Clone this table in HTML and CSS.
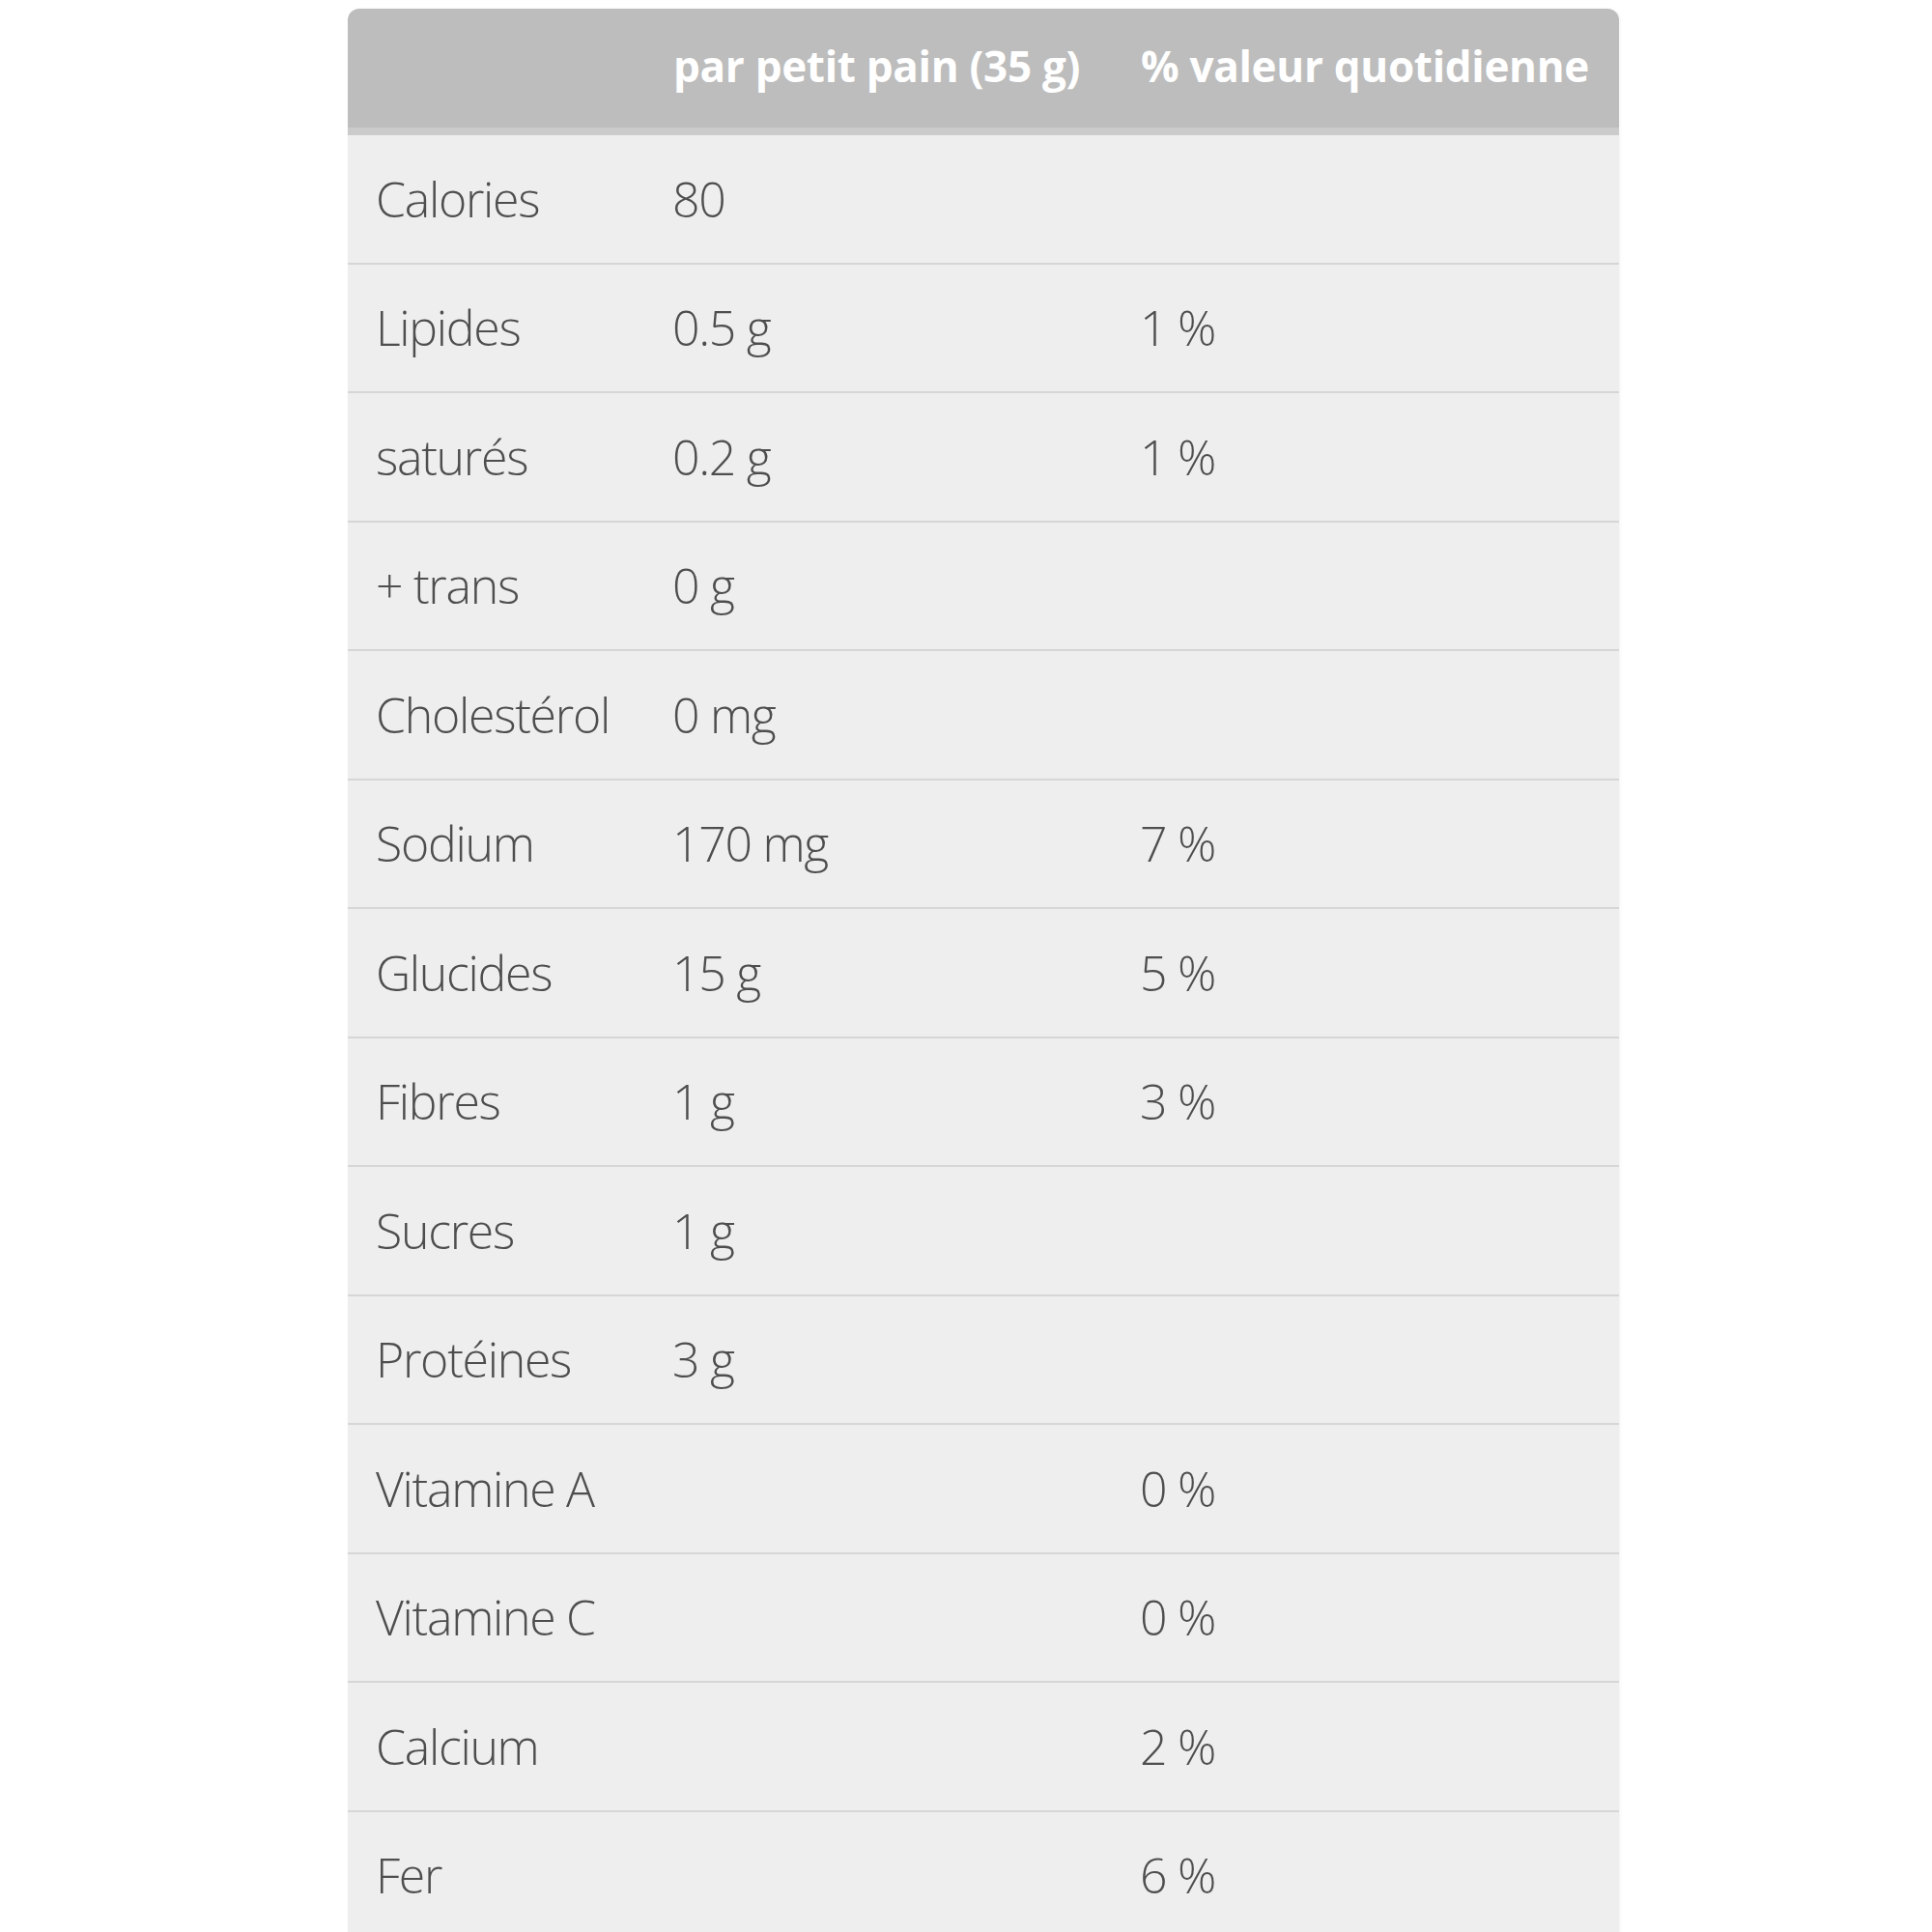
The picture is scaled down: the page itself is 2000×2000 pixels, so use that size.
FILE: index.html
```html
<!DOCTYPE html>
<html lang="fr">
<head>
<meta charset="utf-8">
<title>Valeur nutritive</title>
<link rel="stylesheet" href="styles.css">
</head>
<body>
<div class="nutrition">
  <div class="row head">
    <div class="cell"></div>
    <div class="cell">par petit pain (35 g)</div>
    <div class="cell">% valeur quotidienne</div>
  </div>
  <div class="row"><div class="cell">Calories</div><div class="cell">80</div><div class="cell"></div></div>
  <div class="row"><div class="cell">Lipides</div><div class="cell">0.5 g</div><div class="cell">1 %</div></div>
  <div class="row"><div class="cell">saturés</div><div class="cell">0.2 g</div><div class="cell">1 %</div></div>
  <div class="row"><div class="cell">+ trans</div><div class="cell">0 g</div><div class="cell"></div></div>
  <div class="row"><div class="cell">Cholestérol</div><div class="cell">0 mg</div><div class="cell"></div></div>
  <div class="row"><div class="cell">Sodium</div><div class="cell">170 mg</div><div class="cell">7 %</div></div>
  <div class="row"><div class="cell">Glucides</div><div class="cell">15 g</div><div class="cell">5 %</div></div>
  <div class="row"><div class="cell">Fibres</div><div class="cell">1 g</div><div class="cell">3 %</div></div>
  <div class="row"><div class="cell">Sucres</div><div class="cell">1 g</div><div class="cell"></div></div>
  <div class="row"><div class="cell">Protéines</div><div class="cell">3 g</div><div class="cell"></div></div>
  <div class="row"><div class="cell">Vitamine A</div><div class="cell"></div><div class="cell">0 %</div></div>
  <div class="row"><div class="cell">Vitamine C</div><div class="cell"></div><div class="cell">0 %</div></div>
  <div class="row"><div class="cell">Calcium</div><div class="cell"></div><div class="cell">2 %</div></div>
  <div class="row last"><div class="cell">Fer</div><div class="cell"></div><div class="cell">6 %</div></div>
</div>
</body>
</html>
```
FILE: styles.css
```css
html, body {
  margin: 0;
  padding: 0;
  background: #ffffff;
}
body {
  padding-top: 9px;
}
.nutrition {
  width: 1316px;
  margin-left: 360px;
  background: #eeeeee;
  border-radius: 12px 12px 0 0;
  overflow: hidden;
  font-family: "Open Sans", "Liberation Sans", sans-serif;
  color: #4e4e4e;
  box-shadow: 1px 0 3px rgba(0, 0, 0, 0.06);
}
.row {
  display: grid;
  grid-template-columns: 307px 484px 1fr;
  align-items: center;
  padding-left: 29px;
  height: 131.5px;
  border-bottom: 2px solid #d6d6d6;
  font-weight: 300;
  font-size: 50px;
  letter-spacing: -1.3px;
}
.row.last {
  border-bottom: none;
}
.row.head {
  height: 118px;
  padding-bottom: 5px;
  background: #bdbdbd;
  border-bottom: 8px solid #cbcbcb;
  color: #ffffff;
  font-weight: 700;
  font-size: 44px;
  letter-spacing: -0.3px;
}
.row.head .cell:nth-child(2),
.row.head .cell:nth-child(3) {
  margin-left: 1px;
}
.cell {
  white-space: nowrap;
}
```
